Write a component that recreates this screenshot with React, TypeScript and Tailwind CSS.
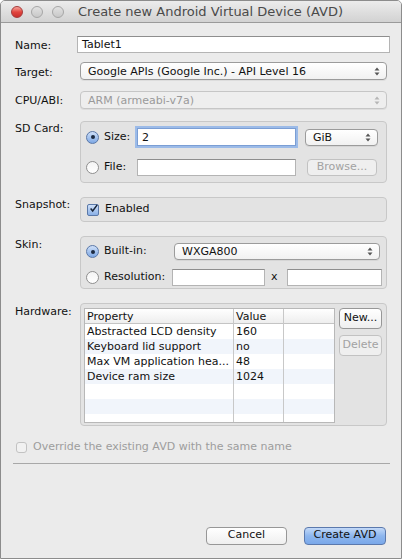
import React from 'react'

const font = { fontFamily: '"Lucida Grande", "DejaVu Sans", sans-serif' }

function Arrows({ disabled }: { disabled?: boolean }) {
  const c = disabled ? '#b5b5b5' : '#555'
  return (
    <svg width="6" height="9" viewBox="0 0 6 9" className="shrink-0">
      <path d="M3 0.5 L5.5 3.5 L0.5 3.5 Z" fill={c} />
      <path d="M3 8.5 L5.5 5.5 L0.5 5.5 Z" fill={c} />
    </svg>
  )
}

function Select({ value, disabled, className }: { value: string; disabled?: boolean; className: string }) {
  return (
    <div
      className={
        'flex items-center justify-between rounded-[4px] border pl-[7px] pr-[6px] shadow-[0_1px_0_rgba(0,0,0,0.06)] ' +
        (disabled
          ? 'border-[#c6c6c6] bg-[#eeeeee] text-[#9a9a9a] '
          : 'border-[#9b9b9b] bg-gradient-to-b from-[#ffffff] to-[#f1f1f1] text-[#111] ') +
        className
      }
    >
      <span className="leading-none">{value}</span>
      <Arrows disabled={disabled} />
    </div>
  )
}

function Field({ value, className, focus }: { value?: string; className: string; focus?: boolean }) {
  return (
    <div
      className={
        'flex items-center bg-white px-[4px] text-[#111] ' +
        (focus
          ? 'border border-[#7b9ed4] shadow-[0_0_0_2px_#9cbbe8] '
          : 'border border-[#b4b4b4] border-t-[#8e8e8e] ') +
        className
      }
    >
      <span className="leading-none">{value}</span>
    </div>
  )
}

function Radio({ on }: { on?: boolean }) {
  return on ? (
    <div className="flex h-[13px] w-[13px] shrink-0 items-center justify-center rounded-full border border-[#5a78a8] bg-gradient-to-b from-[#cfe0f8] to-[#7ea8e4]">
      <div className="h-[4px] w-[4px] rounded-full bg-[#1c2a40]" />
    </div>
  ) : (
    <div className="h-[13px] w-[13px] shrink-0 rounded-full border border-[#8f8f8f] bg-gradient-to-b from-[#f4f4f4] to-[#ffffff]" />
  )
}

function Btn({ label, disabled, primary, className }: { label: string; disabled?: boolean; primary?: boolean; className: string }) {
  return (
    <div
      className={
        'flex items-center justify-center rounded-[4px] border ' +
        (primary
          ? 'border-[#5b79ad] bg-gradient-to-b from-[#c3d9f8] via-[#8db6ee] to-[#7aa8ea] text-[#111] '
          : disabled
          ? 'border-[#c2c2c2] bg-[#efefef] text-[#a2a2a2] '
          : 'border-[#979797] bg-gradient-to-b from-[#ffffff] to-[#efefef] text-[#111] ') +
        className
      }
    >
      {label}
    </div>
  )
}

function Label({ text, top }: { text: string; top: string }) {
  return <div className={'text-[#111] leading-none ' + top}>{text}</div>
}

const rows = [
  ['Abstracted LCD density', '160'],
  ['Keyboard lid support', 'no'],
  ['Max VM application hea...', '48'],
  ['Device ram size', '1024'],
  ['', ''],
  ['', ''],
  ['', ''],
]

export default function App() {
  return (
    <div className="h-[559px] w-[403px] bg-white text-[11px]" style={font}>
      <div className="flex h-[559px] w-[402px] flex-col overflow-hidden rounded-t-[5px] border border-[#8c8c8c] bg-[#ebebeb]">
        {/* title bar */}
        <div className="flex h-[22px] shrink-0 items-center border-b border-[#9a9a9a] bg-gradient-to-b from-[#ececec] to-[#d2d2d2] pl-[10px]">
          <div className="flex gap-[8px]">
            <div className="h-[12px] w-[12px] rounded-full border border-[#a53a3a] bg-gradient-to-b from-[#f4a09a] via-[#e2453f] to-[#c9302c]" />
            <div className="h-[12px] w-[12px] rounded-full border border-[#a6a6a6] bg-gradient-to-b from-[#e2e2e2] to-[#c8c8c8]" />
            <div className="ml-[1px] h-[12px] w-[12px] rounded-full border border-[#a6a6a6] bg-gradient-to-b from-[#e2e2e2] to-[#c8c8c8]" />
          </div>
          <div className="ml-[14px] text-[13px] leading-none text-[#4a4a4a]">Create new Android Virtual Device (AVD)</div>
        </div>

        {/* body */}
        <div className="grid grid-cols-[65px_307px] pl-[14px] pt-[13px]">
          <Label text="Name:" top="pt-[4px]" />
          <Field value="Tablet1" className="-ml-[3px] h-[17px] w-[313px]" />

          <Label text="Target:" top="pt-[14px]" />
          <Select value="Google APIs (Google Inc.) - API Level 16" className="mt-[9px] h-[18px]" />

          <Label text="CPU/ABI:" top="pt-[15px]" />
          <Select value="ARM (armeabi-v7a)" disabled className="mt-[11px] h-[18px]" />

          <Label text="SD Card:" top="pt-[14px]" />
          <div className="mt-[12px] flex h-[62px] flex-col gap-[12px] rounded-[4px] border border-[#c8c8c8] bg-[#e3e3e3] pl-[5px] pt-[6px]">
            <div className="flex h-[18px] items-center">
              <Radio on />
              <span className="ml-[5px] w-[33px] text-[#111]">Size:</span>
              <Field value="2" focus className="h-[18px] w-[159px]" />
              <Select value="GiB" className="ml-[9px] h-[17px] w-[73px]" />
            </div>
            <div className="flex h-[18px] items-center">
              <Radio />
              <span className="ml-[5px] w-[33px] text-[#111]">File:</span>
              <Field className="h-[17px] w-[159px]" />
              <Btn label="Browse..." disabled className="ml-[11px] h-[17px] w-[70px]" />
            </div>
          </div>

          <Label text="Snapshot:" top="pt-[16px]" />
          <div className="mt-[14px] flex h-[25px] items-center rounded-[4px] border border-[#c8c8c8] bg-[#e3e3e3] pl-[6px]">
            <div className="flex h-[12px] w-[12px] items-center justify-center rounded-[2px] border border-[#5a78a8] bg-gradient-to-b from-[#cfe0f8] to-[#8ab0e6]">
              <svg width="11" height="11" viewBox="0 0 11 11" className="-mt-[2px] ml-[1px]">
                <path d="M2 5.5 L4.5 8.5 L10 1" stroke="#1a2538" strokeWidth="1.8" fill="none" />
              </svg>
            </div>
            <span className="ml-[6px] text-[#111]">Enabled</span>
          </div>

          <Label text="Skin:" top="pt-[17px]" />
          <div className="mt-[14px] flex h-[53px] flex-col gap-[9px] rounded-[4px] border border-[#c8c8c8] bg-[#e3e3e3] pl-[5px] pt-[6px]">
            <div className="flex h-[17px] items-center">
              <Radio on />
              <span className="ml-[5px] w-[70px] text-[#111]">Built-in:</span>
              <Select value="WXGA800" className="h-[17px] w-[206px]" />
            </div>
            <div className="flex h-[17px] items-center">
              <Radio />
              <span className="ml-[5px] w-[68px] text-[#111]">Resolution:</span>
              <Field className="h-[17px] w-[93px]" />
              <span className="ml-[6px] w-[16px] text-[#111]">x</span>
              <Field className="h-[17px] w-[95px]" />
            </div>
          </div>

          <Label text="Hardware:" top="pt-[17px]" />
          <div className="mt-[14px] flex h-[123px] rounded-[4px] border border-[#c8c8c8] bg-[#e3e3e3] pl-[3px] pt-[4px]">
            <div className="h-[115px] w-[251px] overflow-hidden border border-[#b8b8b8] bg-white text-[#111]">
              <div className="grid h-[15px] grid-cols-[149px_50px_50px] border-b border-[#c4c4c4] bg-gradient-to-b from-[#ffffff] to-[#eeeeee] leading-[15px]">
                <div className="border-r border-[#c8c8c8] pl-[2px]">Property</div>
                <div className="border-r border-[#c8c8c8] pl-[2px]">Value</div>
                <div />
              </div>
              {rows.map((r, i) => (
                <div
                  key={i}
                  className={'grid h-[15px] grid-cols-[149px_50px_50px] leading-[15px] ' + (i % 2 === 1 ? 'bg-[#f1f5fb]' : 'bg-white')}
                >
                  <div className="whitespace-nowrap border-r border-[#c8c8c8] pl-[2px]">{r[0]}</div>
                  <div className="border-r border-[#c8c8c8] pl-[2px]">{r[1]}</div>
                  <div />
                </div>
              ))}
            </div>
            <div className="ml-[4px] flex flex-col gap-[6px]">
              <Btn label="New..." className="h-[21px] w-[43px]" />
              <Btn label="Delete" disabled className="h-[21px] w-[43px]" />
            </div>
          </div>
        </div>

        <div className="ml-[15px] mt-[13px] flex items-center">
          <div className="h-[11px] w-[11px] rounded-[3px] border border-[#c2c2c2] bg-[#f1f1f1]" />
          <span className="ml-[6px] text-[#9d9d9d]">Override the existing AVD with the same name</span>
        </div>

        <div className="ml-[12px] mt-[7px] h-px w-[377px] bg-[#a8a8a8]" />

        <div className="mt-[63px] flex justify-end gap-[17px] pr-[15px]">
          <Btn label="Cancel" className="h-[18px] w-[81px]" />
          <Btn label="Create AVD" primary className="h-[18px] w-[82px]" />
        </div>
      </div>
    </div>
  )
}
